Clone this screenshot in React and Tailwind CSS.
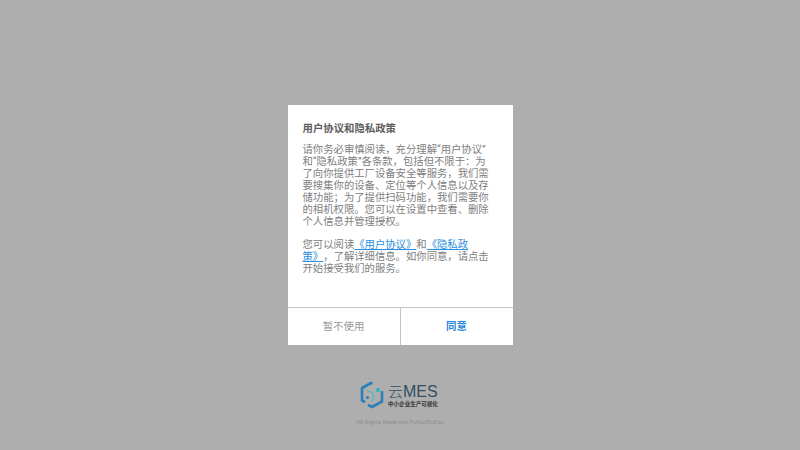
export default function App() {
  const cjk = { fontFamily: 'Roboto, "Noto Sans CJK SC", sans-serif' };
  return (
    <div className="w-[800px] h-[450px] bg-[#aeaeae] flex flex-col items-center overflow-hidden [text-spacing-trim:space-all]" style={cjk}>
      <div className="w-[225px] h-[240px] mt-[105px] bg-white flex flex-col">
        <div className="flex-1 pl-[15px] pr-[21px] pt-[17px]">
          <h2 className="text-[10.4px] leading-[13px] font-bold text-[#5e5e5e]">用户协议和隐私政策</h2>
          <p className="mt-[9px] text-[10.35px] leading-[12px] text-[#808080]">
            请你务必审慎阅读，充分理解“用户协议”<wbr />和“隐私政策”各条款，包括但不限于：为了向你提供工厂设备安全等服务，我们需要搜集你的设备、定位等个人信息以及存储功能；为了提供扫码功能，我们需要你的相机权限。您可以在设置中查看、删除个人信息并管理授权。
          </p>
          <p className="mt-[11px] text-[10.35px] leading-[12px] text-[#808080]">
            您可以阅读<span className="text-[#2b8fe0] underline underline-offset-[1px]">《用户协议》</span>和<span className="text-[#2b8fe0] underline underline-offset-[1px]">《隐私政策》</span>，了解详细信息。如你同意，请点击开始接受我们的服务。
          </p>
        </div>
        <div className="h-[38px] flex border-t border-[#c4c4c4]">
          <div className="flex-1 flex items-center justify-center text-[10.4px] text-[#9a9a9a] border-r border-[#c4c4c4]">暂不使用</div>
          <div className="flex-1 flex items-center justify-center text-[10.4px] font-bold text-[#1f86d8]">同意</div>
        </div>
      </div>
      <div className="mt-[36px] flex items-center gap-[4px] -translate-x-[1px]">
        <svg width="24" height="28" viewBox="0 0 24 28" fill="none">
          <path d="M12.5 2.8 L11 2 L2 7 V19.5 L5 21.2" stroke="#2d7fb8" strokeWidth="2.6" strokeLinejoin="round" />
          <path d="M22 10 V20.5 L12 26 L8 23.8" stroke="#2d7fb8" strokeWidth="2.6" strokeLinejoin="round" />
          <path d="M8 10.5 C11.5 10 14 12.5 13.5 16.5 C13.3 18 12.8 19 12 20" stroke="#5fb7c4" strokeWidth="1.6" strokeLinecap="round" />
          <circle cx="18" cy="9" r="2.2" fill="#38b5b3" />
          <circle cx="7.5" cy="16.5" r="1.6" fill="#2d7fb8" />
        </svg>
        <div className="flex flex-col items-start w-[50px]">
          <span className="text-[16px] leading-[17px] text-[#33505f] whitespace-nowrap" style={{ fontFamily: '"Liberation Sans", "Noto Sans CJK SC", sans-serif' }}><span className="text-[15px] font-light">云</span>MES</span>
          <span className="text-[5.55px] leading-[8px] font-bold text-[#3a3a3a] whitespace-nowrap">中小企业生产可视化</span>
        </div>
      </div>
      <div className="mt-[9px] text-[6px] leading-[8px] text-[#8f8f8f]">All Rights Reserved PuHuiZhiZao</div>
    </div>
  );
}
